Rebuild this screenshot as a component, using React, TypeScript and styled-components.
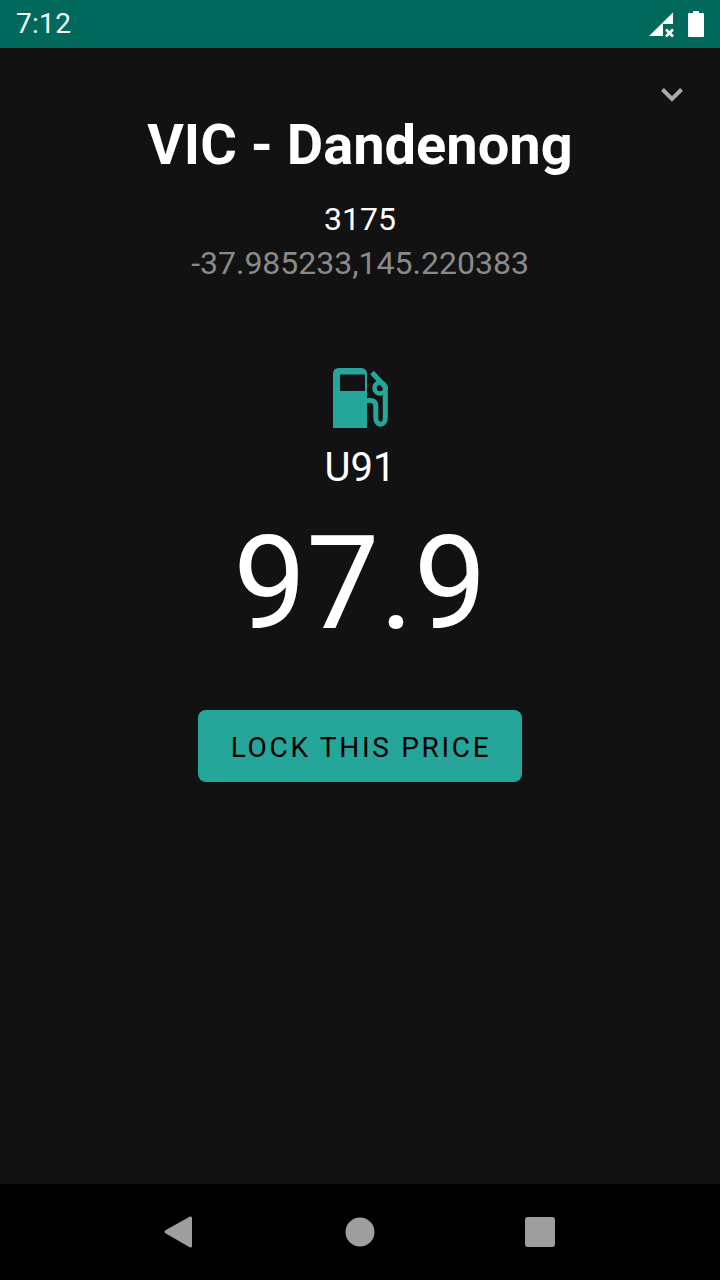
import React from "react";
import styled, { createGlobalStyle } from "styled-components";

const Global = createGlobalStyle`
  html, body { margin: 0; padding: 0; background: #121212; }
  body { font-family: Roboto, "Noto Sans", sans-serif; }
`;

const Screen = styled.div`
  width: 720px;
  height: 1280px;
  display: flex;
  flex-direction: column;
  background: #121212;
  overflow: hidden;
`;

/* ─── Status bar ─────────────────────────────────────── */
const StatusBar = styled.div`
  height: 48px;
  flex: none;
  background: #00695c;
  display: flex;
  align-items: center;
  justify-content: space-between;
  padding: 0 16px;
  color: #fff;
`;

const Clock = styled.span`
  font-size: 28px;
  line-height: 48px;
  letter-spacing: 0.3px;
  color: #f2f8f7;
`;

const StatusIcons = styled.svg`
  display: block;
  width: 60px;
  height: 48px;
`;

/* ─── Content ────────────────────────────────────────── */
const Content = styled.main`
  flex: 1;
  display: flex;
  flex-direction: column;
  align-items: center;
  padding: 0 24px;
`;

const CollapseRow = styled.div`
  align-self: stretch;
  display: flex;
  justify-content: flex-end;
  padding: 38px 0 0;
  margin-right: 12px;
  height: 20px;
`;

const Chevron = styled.svg`
  display: block;
  width: 24px;
  height: 16px;
`;

const Title = styled.h1`
  margin: 3px 0 0;
  font-size: 56px;
  line-height: 72px;
  font-weight: 700;
  color: #fff;
`;

const Postcode = styled.div`
  margin-top: 16px;
  font-size: 32px;
  line-height: 44px;
  color: #fff;
`;

const Coords = styled.div`
  font-size: 32px;
  line-height: 44px;
  color: #8a8a8a;
`;

const PumpIcon = styled.svg`
  display: block;
  margin-top: 83px;
  margin-left: 1px;
  width: 56px;
  height: 60px;
`;

const Grade = styled.div`
  margin-top: 10px;
  font-size: 40px;
  line-height: 60px;
  color: #fff;
`;

const Price = styled.div`
  margin-top: 6px;
  font-size: 130px;
  line-height: 160px;
  color: #fff;
`;

const LockButton = styled.button`
  margin-top: 46px;
  width: 324px;
  height: 72px;
  padding: 2px 0 0 2px;
  border: 0;
  border-radius: 8px;
  background: #26a69a;
  color: #000;
  font-family: Roboto, sans-serif;
  font-size: 28px;
  font-weight: 400;
  letter-spacing: 2.7px;
`;

/* ─── Navigation bar ─────────────────────────────────── */
const NavBar = styled.nav`
  height: 96px;
  flex: none;
  background: #000;
  display: flex;
  align-items: center;
  justify-content: space-between;
  padding: 0 165px 0 164px;
`;

const NavIcon = styled.svg`
  display: block;
  width: 30px;
  height: 32px;
  fill: #9e9e9e;
`;

export default function App() {
  return (
    <Screen>
      <Global />
      <StatusBar>
        <Clock>7:12</Clock>
        <StatusIcons viewBox="-4 0 60 48" fill="#fff">
          <path d="M1 36 L25 12.5 V24 H15 V36 Z" />
          <path d="M18 29.5 L25 36.5 M25 29.5 L18 36.5" fill="none" stroke="#fff" strokeWidth="2.6" />
          <path d="M45 11 H51 V13 H55 Q56 13 56 14 V36 Q56 37 55 37 H41 Q40 37 40 36 V14 Q40 13 41 13 H45 Z" />
        </StatusIcons>
      </StatusBar>

      <Content>
        <CollapseRow>
          <Chevron viewBox="0 0 24 16">
            <path d="M2.5 3.5 L12 13 L21.5 3.5" fill="none" stroke="#aaa" strokeWidth="4" />
          </Chevron>
        </CollapseRow>
        <Title>VIC - Dandenong</Title>
        <Postcode>3175</Postcode>
        <Coords>-37.985233,145.220383</Coords>
        <PumpIcon viewBox="23 13 56 60">
          <path
            fill="#26a69a"
            fillRule="evenodd"
            d="M29 13 H51 Q57 13 57 19 V73 H23 V19 Q23 13 29 13 Z M30 19.5 V36 H55 V19.5 Z"
          />
          <path
            fill="none"
            stroke="#26a69a"
            strokeWidth="5"
            d="M56 45.5 H60 Q65.8 45.5 65.8 51 V63 A4.75 6.3 0 0 0 75.3 63 V32 L62 17.5"
          />
          <circle cx="70" cy="33" r="5.5" fill="none" stroke="#26a69a" strokeWidth="4.5" />
        </PumpIcon>
        <Grade>U91</Grade>
        <Price>97.9</Price>
        <LockButton>LOCK THIS PRICE</LockButton>
      </Content>

      <NavBar>
        <NavIcon viewBox="0 0 30 32">
          <path d="M26 .5 L1 14.5 Q0 16 1 17 L26 31.5 Q28 32 28 30 V2 Q28 0 26 .5 Z" />
        </NavIcon>
        <NavIcon viewBox="0 0 30 32">
          <circle cx="15" cy="16" r="14.5" />
        </NavIcon>
        <NavIcon viewBox="0 0 30 32">
          <rect x="0" y="1" width="30" height="30" rx="3" />
        </NavIcon>
      </NavBar>
    </Screen>
  );
}
